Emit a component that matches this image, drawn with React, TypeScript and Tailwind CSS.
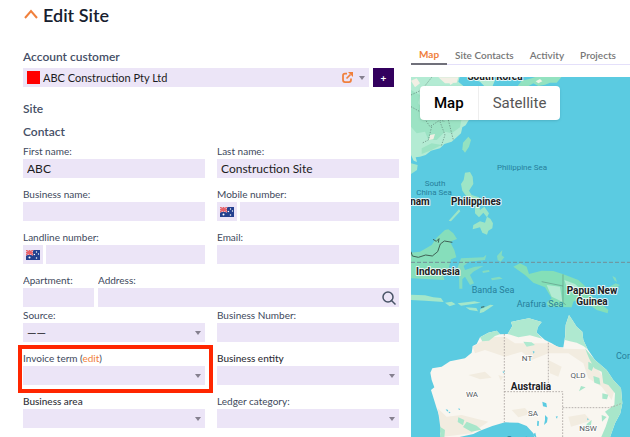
import React from "react";

const control =
  "block h-[19px] w-full min-w-0 appearance-none rounded-none bg-[#ece5f7] px-1 leading-4 text-[#1c1c22] outline-none";
const labelText = "block h-4 truncate text-[10px] leading-4";

function Caret({ className = "right-1" }: { className?: string }) {
  return (
    <span
      className={`pointer-events-none absolute top-2 border-x-[3px] border-t-4 border-x-transparent border-t-[#85808f] ${className}`}
    />
  );
}

function Flag() {
  return (
    <svg viewBox="0 0 28 20" className="h-[10px] w-[14px]" aria-hidden="true">
      <rect width="28" height="20" fill="#24418f" />
      <path d="M0 0L14 10M14 0L0 10" stroke="#f3c9d2" strokeWidth="4" />
      <path d="M7 0V10M0 5H14" stroke="#f6dde2" strokeWidth="5" />
      <path d="M7 0V10M0 5H14M0 0L14 10M14 0L0 10" stroke="#e8626a" strokeWidth="2.5" />
      <g fill="#fff">
        <circle cx="7" cy="15" r="2" />
        <circle cx="21" cy="4" r="1.3" />
        <circle cx="17" cy="9" r="1.3" />
        <circle cx="25" cy="8" r="1.3" />
        <circle cx="21" cy="16" r="1.5" />
      </g>
    </svg>
  );
}

type FieldProps = {
  id: string;
  label: string;
  value?: string;
  kind?: "text" | "phone" | "select" | "search";
  dark?: boolean;
};

function Field({ id, label, value = "", kind = "text", dark }: FieldProps) {
  return (
    <div className="min-w-0">
      <label htmlFor={id} className={`${labelText} ${dark ? "font-medium text-[#303038]" : "text-[#3d485c]"}`}>
        {label}
      </label>
      {kind === "select" ? (
        <SelectBox id={id} value={value} />
      ) : kind === "phone" ? (
        <div className="flex gap-[3px]">
          <button
            type="button"
            aria-label="Country code"
            className="flex h-[19px] w-5 shrink-0 items-center justify-center bg-[#ece5f7]"
          >
            <Flag />
          </button>
          <input id={id} type="tel" defaultValue={value} className={`${control} text-xs`} />
        </div>
      ) : kind === "search" ? (
        <div className="relative">
          <input id={id} type="text" defaultValue={value} className={`${control} text-xs`} />
          <svg
            viewBox="0 0 14 14"
            className="pointer-events-none absolute top-[3px] right-[3px] size-[14px]"
            fill="none"
            stroke="#485366"
            strokeWidth="1.5"
            aria-hidden="true"
          >
            <circle cx="6" cy="6" r="5" />
            <path d="M9 9L13.5 13.5" />
          </svg>
        </div>
      ) : (
        <input id={id} type="text" defaultValue={value} className={`${control} text-xs`} />
      )}
    </div>
  );
}

function SelectBox({ id, value }: { id: string; value: string }) {
  return (
    <div className="relative">
      <select id={id} className={`${control} text-xs`}>
        <option>{value}</option>
      </select>
      <Caret />
    </div>
  );
}

const countries = [
  { text: "South Korea", x: 84, y: 3 },
  { text: "Vietnam", x: 0, y: 128 },
  { text: "Philippines", x: 65, y: 128 },
  { text: "Indonesia", x: 27, y: 198 },
  { text: "Papua New", x: 181, y: 217 },
  { text: "Guinea", x: 181, y: 228 },
  { text: "Australia", x: 120, y: 313 },
];
const seas = [
  { text: "Philippine Sea", x: 111, y: 93, size: 8 },
  { text: "South", x: 24, y: 109, size: 8 },
  { text: "China Sea", x: 23, y: 118, size: 8 },
  { text: "Banda Sea", x: 82, y: 216, size: 9 },
  { text: "Arafura Sea", x: 129, y: 230, size: 9 },
  { text: "Coral Sea", x: 224, y: 282, size: 9 },
  { text: "Great", x: 106, y: 366, size: 9 },
];
const states = [
  { text: "NT", x: 116, y: 284 },
  { text: "QLD", x: 167, y: 301 },
  { text: "WA", x: 61, y: 320 },
  { text: "SA", x: 122, y: 339 },
  { text: "NSW", x: 177, y: 354 },
];

function MapDrawing() {
  return (
    <svg
      viewBox="0 0 219 360"
      preserveAspectRatio="xMinYMin slice"
      className="block h-[360px] w-full bg-[#5bcbe1] font-['Roboto',sans-serif]"
      role="img"
      aria-label="Map of Australia and the western Pacific"
    >
      {/* East Asia */}
      <g transform="translate(-6 -37) scale(.33333)">
        <path
          fill="#b3ebd3"
          d="M18 108H165L160 125 178 140 205 160 212 200 205 225 190 242 182 256 172 262 168 280 155 292 140 305 118 312 105 325 78 332 62 345 45 350 32 352 36 366 26 362 18 345Z"
        />
        <path
          fill="#9ce3c4"
          d="M18 150L45 165 40 190 60 215 90 240 130 235 170 235 165 262 140 280 120 275 95 300 70 300 60 275 35 280 18 260ZM50 325L80 310 110 315 75 332 50 342Z"
        />
        <path fill="#f2efe4" d="M18 122L35 115 45 130 30 142ZM100 112H160L155 128 120 130ZM75 285L90 282 85 298 72 300ZM130 122l18 5-12 8Z" />
        <path fill="none" stroke="#5d7d72" strokeWidth="2" strokeDasharray="4 4" d="M18 165L50 150 80 112M18 200L45 215 75 260 105 240 120 245M80 260L70 300 50 310M105 245L120 285 108 320M130 240L145 300" />
        <path fill="#b3ebd3" d="M185 108L260 108 270 120 262 140 240 140 225 125Z" />
        <path fill="#93e2c0" d="M338 138L350 122 375 116 400 108H472L455 128 435 128 420 134 400 138 385 130 365 142Z" />
        <path fill="#eef4e6" d="M392 124L405 117 412 124 400 130Z" />
        <path fill="#93e2c0" d="M190 290L198 300 192 320 180 338 172 328 174 308Z" />
        <path fill="#a4e7ca" d="M18 370L38 375 36 390 18 402Z" />
      </g>
      {/* South-east Asia */}
      <g transform="translate(-6 93) scale(.33333)">
        <path
          fill="#9de5c6"
          d="M180 8L195 6 203 20 205 42 192 62 200 75 222 82 227 100 215 92 200 90 186 82 172 62 168 42 176 30ZM162 118L166 124 138 154 131 152ZM210 108L222 108 225 120 238 110 252 130 246 142 235 128 222 142 210 130ZM205 165L225 154 240 158 246 140 256 146 264 160 262 175 250 182 246 194 232 188 225 172 203 178Z"
        />
        <path
          fill="#86debb"
          d="M18 248L45 245 80 225 95 203 120 180 130 178 145 190 156 207 135 215 148 240 154 262 138 268 130 300 112 305 118 330 18 325Z"
        />
        <path
          fill="#84dcc0"
          d="M168 265L235 262 244 254 240 270 192 275 176 288 180 300 210 290 235 288 205 305 195 315 207 340 195 345 180 320 172 328 172 356 163 356 162 320 153 305ZM276 258L292 240 290 256 298 262 287 275 278 270ZM232 303l20-3 2 5-20 4ZM258 325l25-5 10 6-32 5Z"
        />
        <path
          fill="#84dfb8"
          d="M325 290L345 280 365 290 372 312 410 302 445 303 475 313 520 330 540 348 545 365 580 395 610 420 608 430 575 420 550 402 520 388 505 395 500 412 430 410 425 398 440 385 420 352 385 338 360 315Z"
        />
        <path fill="#b3ebd3" d="M425 345L465 350 472 395 440 380ZM478 330L510 342 530 360 485 350Z" />
        <path fill="#84dcc0" d="M575 360L605 355 632 340 645 345 625 362 595 370ZM622 318l10 5 4 14-8-6Z" />
        <path
          fill="#a4e7ca"
          d="M18 374L60 376 85 382 108 384 116 396 60 392 18 390ZM120 398l20-3 12 8-18 6ZM158 400l50-6 20 4-60 9ZM182 412l32 2 5 10-25-4ZM226 418l30-14 10 2-30 20-12 4Z"
        />
        <path fill="none" stroke="#3f6054" strokeWidth="3" d="M18 245L22 258 40 262 62 255 82 258 98 245 106 222 118 213 142 217M84 208l10 6 8-8-2 12M228 412l10-2" />
        <path fill="none" stroke="#609987" strokeWidth="2" d="M474 313V398l8 6M410 335L474 348" />
        <path stroke="#739098" strokeWidth="3" strokeDasharray="12 6" d="M18 277H2000" />
      </g>
      {/* Australia */}
      <g transform="translate(-6 223) scale(.33333)">
        <path
          fill="#f9f6f0"
          d="M76 218L82 205 110 200 135 184 180 175 200 158 203 138 215 132 225 112 250 98 275 92 285 103 308 102 322 78 318 66 345 60 372 55 410 66 398 82 395 98 420 120 440 130 460 142 475 142 480 110 482 75 492 45 502 60 515 80 532 95 535 120 548 148 570 180 605 210 625 240 648 265 652 310 646 340 630 370 612 420H390L385 400 365 378 340 368 300 367 262 378 225 392 205 402 150 414H108L105 400 114 380 95 325 78 270 88 262 80 240Z"
        />
        <path
          fill="#f2ece0"
          d="M203 140L250 112 300 110 330 130 430 130 478 146 540 148 600 240 632 260 620 300 590 260 550 235 535 190 490 160 430 160 380 180 350 155 300 170 240 150 210 160ZM190 225l50-10 20 18-35 5ZM280 225l15 5-8 12ZM98 325L125 350 170 345 250 365 200 400 110 411ZM320 330l40-6 15 18-35 10ZM430 180l40 20-10 30-25-10ZM490 350l50-8 18 20-60 18Z"
        />
        <path
          fill="#afe9d0"
          d="M225 112L250 98 275 92 285 103 270 108 252 122 232 124ZM308 102L322 78 318 66 345 60 372 55 410 66 398 82 395 98 412 116 375 106 340 112ZM480 120L482 75 492 45 502 60 515 80 532 95 535 120 548 148 535 138 515 128 495 124ZM355 125l25 2 10 8-25 5Z"
        />
        <path
          fill="#a8e6ca"
          d="M540 145L570 180 605 210 625 240 648 265 652 310 646 340 630 370 612 420H585L602 380 612 350 600 335 628 315 630 280 610 255 595 250 590 215 568 205 552 175ZM550 185l18 10-8 18-10-6ZM565 228l18 6 3 20-18-6ZM528 258l14 4-20 12ZM592 280l18 4-4 14-14-2ZM545 372l15-12-3 20-12 12ZM160 352l18 8-4 16-16-10ZM185 365l30 12 14 12-30 6-25-14ZM105 380l15 10-2 24h-12ZM590 345l15 6-14 14Z"
        />
        <g fill="#5bcbe1">
          <path d="M412 305l12 5 2 12-12-3ZM420 345l8 8-2 14-9 8 3-15ZM397 362l5 2-1 14-5-1ZM452 350l6-2-2 8ZM383 153l6 2-3 6ZM292 215l8-1-4 5ZM122 328l8 2-3 5ZM160 325l6 2-4 4ZM130 335l7 1-4 4ZM548 353l3 6-4 2ZM384 403l7-5 5 22Z" />
        </g>
        <path
          fill="none"
          stroke="#aaa29f"
          strokeWidth="2.5"
          strokeDasharray="5 4"
          d="M298 102V367M430 128V275M298 275H473V420M473 323H610L630 318 650 310"
        />
      </g>
      <g textAnchor="middle" fill="#277f9b">
        {seas.map((l) => (
          <text key={l.text} x={l.x} y={l.y} fontSize={l.size}>
            {l.text}
          </text>
        ))}
      </g>
      <g textAnchor="middle" fontSize="8" fill="#55595c" stroke="#ffffff" strokeWidth="1.5" paintOrder="stroke">
        {states.map((l) => (
          <text key={l.text} x={l.x} y={l.y}>
            {l.text}
          </text>
        ))}
      </g>
      <g
        textAnchor="middle"
        fontSize="10"
        fontWeight="700"
        fill="#1b2023"
        stroke="#ffffff"
        strokeOpacity="0.8"
        strokeWidth="2"
        paintOrder="stroke"
        strokeLinejoin="round"
      >
        {countries.map((l) => (
          <text key={l.text} x={l.x} y={l.y}>
            {l.text}
          </text>
        ))}
      </g>
    </svg>
  );
}

const tabs = ["Map", "Site Contacts", "Activity", "Projects"];

export default function App() {
  return (
    <main className="grid grid-cols-[376fr_219fr] gap-3 overflow-hidden bg-white pl-[23px] font-['Lato','Liberation_Sans',sans-serif]">
      <form className="min-w-0">
        <h1 className="flex h-[30px] items-center gap-1 text-lg leading-6 font-semibold text-[#17202e]">
          <svg viewBox="0 0 16 16" className="size-4 shrink-0" fill="none" stroke="#f0803c" strokeWidth="2" aria-hidden="true">
            <path d="M2 11L8 4L14 11" />
          </svg>
          Edit Site
        </h1>

        <label htmlFor="account" className="mt-[18px] block h-5 text-xs leading-[18px] font-semibold text-[#454f66]">
          Account customer
        </label>
        <div className="flex gap-1 pr-[5px]">
          <div className="relative min-w-0 flex-1">
            <select id="account" className={`${control} pl-5 text-[11px]`}>
              <option>ABC Construction Pty Ltd</option>
            </select>
            <span className="pointer-events-none absolute top-[3px] left-1 size-[13px] bg-[#ff0000]" />
            <a href="#account" aria-label="Open account" className="absolute top-1 right-4 text-[#f0803c]">
              <svg viewBox="0 0 22 22" className="size-[11px]" fill="none" stroke="currentColor" strokeWidth="3.5">
                <path d="M10 3H6Q2 3 2 7V16Q2 20 6 20H14Q18 20 18 16V13" />
                <path d="M9 13L17 5" />
                <path d="M12 0H22V10Z" fill="currentColor" stroke="none" />
              </svg>
            </a>
            <Caret />
          </div>
          <button
            type="button"
            aria-label="Add account"
            className="flex h-[19px] w-[21px] items-center justify-center bg-[#33005e] text-[10px] leading-4 font-bold text-white"
          >
            +
          </button>
        </div>

        <h2 className="mt-3 h-[23px] text-xs leading-5 font-semibold text-[#454f66]">Site</h2>
        <h2 className="h-[21px] text-xs leading-5 font-semibold text-[#454f66]">Contact</h2>

        <div className="grid grid-cols-2 gap-x-3 gap-y-2">
          <Field id="first" label="First name:" value="ABC" />
          <Field id="last" label="Last name:" value="Construction Site" />
          <Field id="business" label="Business name:" />
          <Field id="mobile" label="Mobile number:" kind="phone" />
          <Field id="landline" label="Landline number:" kind="phone" />
          <Field id="email" label="Email:" />
        </div>

        <div className="mt-2 grid grid-cols-[71fr_301fr] gap-1">
          <Field id="apartment" label="Apartment:" />
          <Field id="address" label="Address:" kind="search" />
        </div>

        <div className="grid grid-cols-2 gap-x-3 gap-y-2 pb-2">
          <Field id="source" label="Source:" value="——" kind="select" />
          <Field id="abn" label="Business Number:" />
          <div className="relative min-w-0">
            <div className={`${labelText} text-[#3d485c]`}>
              <label htmlFor="term">Invoice term</label> (
              <a href="#edit" className="text-[#f0803c]">
                edit
              </a>
              )
            </div>
            <SelectBox id="term" value="" />
            <span className="pointer-events-none absolute -top-[5px] -right-2 -bottom-2 -left-[5px] border-4 border-[#ff2600]" />
          </div>
          <Field id="entity" label="Business entity" kind="select" dark />
          <Field id="area" label="Business area" kind="select" dark />
          <Field id="ledger" label="Ledger category:" kind="select" />
        </div>
      </form>

      <section className="min-w-0 overflow-hidden pt-11">
        <nav className="mb-3 flex h-[21px] border-b border-[#e4e0fa] text-[10px] leading-5 font-semibold whitespace-nowrap text-[#777777]" role="tablist">
          {tabs.map((t, i) => (
            <button
              key={t}
              type="button"
              role="tab"
              aria-selected={i === 0}
              className={`h-[21px] shrink-0 px-2 ${i === 0 ? "border-b-2 border-[#70707a] font-bold text-[#f0803c]" : ""}`}
            >
              {t}
            </button>
          ))}
        </nav>
        <div className="relative">
          <MapDrawing />
          <div className="absolute top-[9px] left-[9px] flex h-[34px] rounded-sm bg-white font-['Roboto',sans-serif] text-[15px] leading-5 text-[#565656] shadow">
            <button type="button" className="border-r border-[#eeeeee] px-[14px] font-medium text-black">
              Map
            </button>
            <button type="button" className="px-[14px]">
              Satellite
            </button>
          </div>
        </div>
      </section>
    </main>
  );
}
